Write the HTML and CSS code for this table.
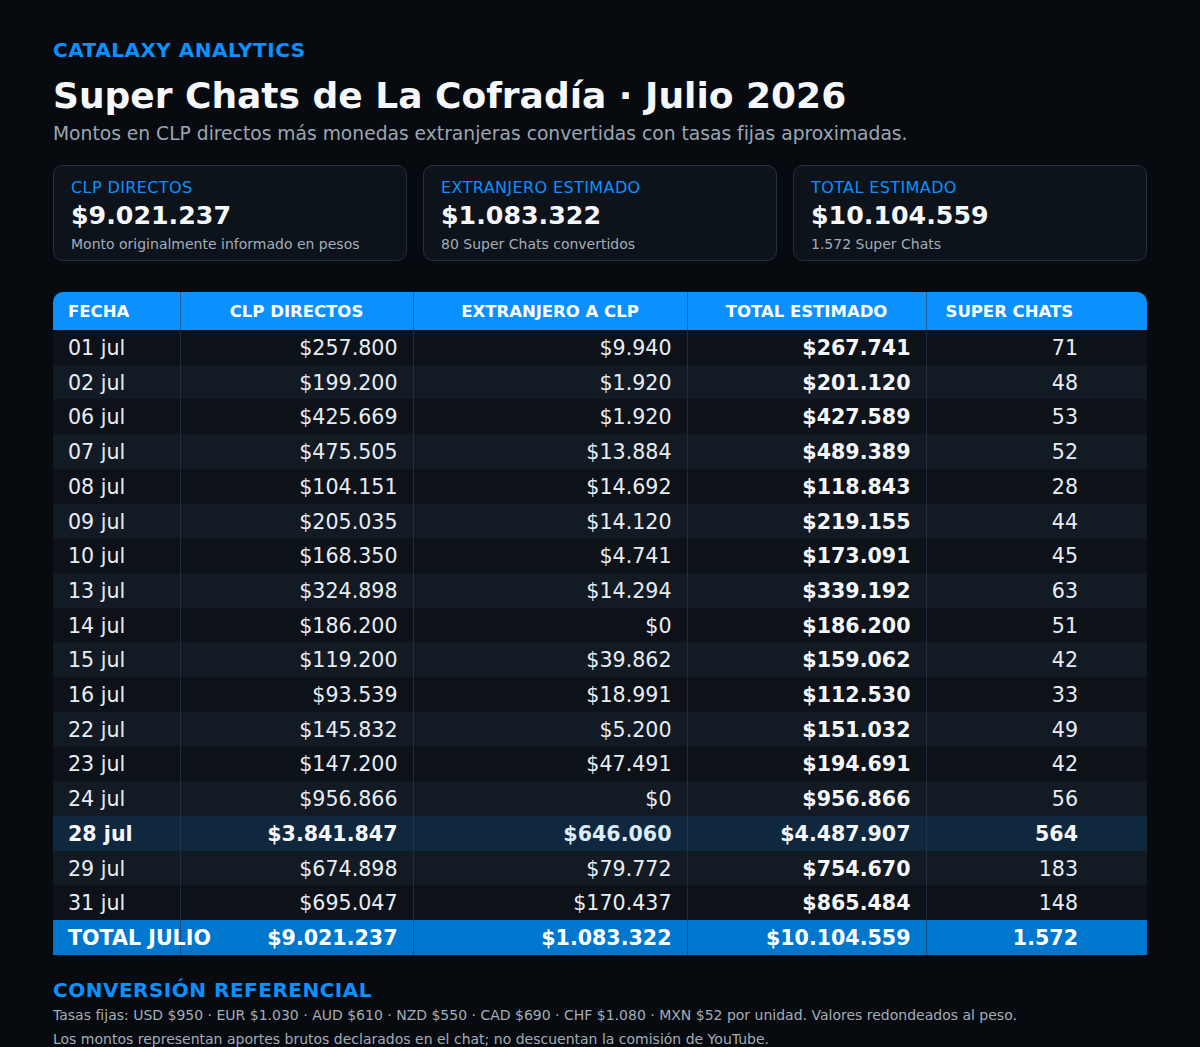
FILE: index.html
```html
<!DOCTYPE html>
<html lang="es">
<head>
<meta charset="utf-8">
<title>Super Chats de La Cofradía · Julio 2026</title>
<link rel="stylesheet" href="styles.css">
</head>
<body>
<main class="page">
  <header class="head">
    <div class="brand">CATALAXY ANALYTICS</div>
    <h1 class="title">Super Chats de La Cofradía · Julio 2026</h1>
    <p class="subtitle">Montos en CLP directos más monedas extranjeras convertidas con tasas fijas aproximadas.</p>
  </header>

  <section class="cards">
    <div class="card">
      <div class="card-label">CLP DIRECTOS</div>
      <div class="card-value">$9.021.237</div>
      <div class="card-note">Monto originalmente informado en pesos</div>
    </div>
    <div class="card">
      <div class="card-label">EXTRANJERO ESTIMADO</div>
      <div class="card-value">$1.083.322</div>
      <div class="card-note">80 Super Chats convertidos</div>
    </div>
    <div class="card">
      <div class="card-label">TOTAL ESTIMADO</div>
      <div class="card-value">$10.104.559</div>
      <div class="card-note">1.572 Super Chats</div>
    </div>
  </section>

  <div class="table-wrap">
    <table class="data">
      <colgroup>
        <col class="c-date"><col class="c-clp"><col class="c-ext"><col class="c-tot"><col class="c-sc">
      </colgroup>
      <thead>
        <tr>
          <th class="left">FECHA</th>
          <th>CLP DIRECTOS</th>
          <th>EXTRANJERO A CLP</th>
          <th>TOTAL ESTIMADO</th>
          <th class="left sc-head">SUPER CHATS</th>
        </tr>
      </thead>
      <tbody>
        <tr><td>01 jul</td><td class="num">$257.800</td><td class="num">$9.940</td><td class="num strong">$267.741</td><td class="num sc">71</td></tr>
        <tr><td>02 jul</td><td class="num">$199.200</td><td class="num">$1.920</td><td class="num strong">$201.120</td><td class="num sc">48</td></tr>
        <tr><td>06 jul</td><td class="num">$425.669</td><td class="num">$1.920</td><td class="num strong">$427.589</td><td class="num sc">53</td></tr>
        <tr><td>07 jul</td><td class="num">$475.505</td><td class="num">$13.884</td><td class="num strong">$489.389</td><td class="num sc">52</td></tr>
        <tr><td>08 jul</td><td class="num">$104.151</td><td class="num">$14.692</td><td class="num strong">$118.843</td><td class="num sc">28</td></tr>
        <tr><td>09 jul</td><td class="num">$205.035</td><td class="num">$14.120</td><td class="num strong">$219.155</td><td class="num sc">44</td></tr>
        <tr><td>10 jul</td><td class="num">$168.350</td><td class="num">$4.741</td><td class="num strong">$173.091</td><td class="num sc">45</td></tr>
        <tr><td>13 jul</td><td class="num">$324.898</td><td class="num">$14.294</td><td class="num strong">$339.192</td><td class="num sc">63</td></tr>
        <tr><td>14 jul</td><td class="num">$186.200</td><td class="num">$0</td><td class="num strong">$186.200</td><td class="num sc">51</td></tr>
        <tr><td>15 jul</td><td class="num">$119.200</td><td class="num">$39.862</td><td class="num strong">$159.062</td><td class="num sc">42</td></tr>
        <tr><td>16 jul</td><td class="num">$93.539</td><td class="num">$18.991</td><td class="num strong">$112.530</td><td class="num sc">33</td></tr>
        <tr><td>22 jul</td><td class="num">$145.832</td><td class="num">$5.200</td><td class="num strong">$151.032</td><td class="num sc">49</td></tr>
        <tr><td>23 jul</td><td class="num">$147.200</td><td class="num">$47.491</td><td class="num strong">$194.691</td><td class="num sc">42</td></tr>
        <tr><td>24 jul</td><td class="num">$956.866</td><td class="num">$0</td><td class="num strong">$956.866</td><td class="num sc">56</td></tr>
        <tr class="peak"><td>28 jul</td><td class="num">$3.841.847</td><td class="num ext-peak">$646.060</td><td class="num strong">$4.487.907</td><td class="num sc">564</td></tr>
        <tr><td>29 jul</td><td class="num">$674.898</td><td class="num">$79.772</td><td class="num strong">$754.670</td><td class="num sc">183</td></tr>
        <tr><td>31 jul</td><td class="num">$695.047</td><td class="num">$170.437</td><td class="num strong">$865.484</td><td class="num sc">148</td></tr>
      </tbody>
      <tfoot>
        <tr><td class="total-label">TOTAL JULIO</td><td class="num">$9.021.237</td><td class="num">$1.083.322</td><td class="num">$10.104.559</td><td class="num sc">1.572</td></tr>
      </tfoot>
    </table>
  </div>

  <section class="notes">
    <h2 class="notes-title">CONVERSIÓN REFERENCIAL</h2>
    <p class="note">Tasas fijas: USD $950 · EUR $1.030 · AUD $610 · NZD $550 · CAD $690 · CHF $1.080 · MXN $52 por unidad. Valores redondeados al peso.</p>
    <p class="note">Los montos representan aportes brutos declarados en el chat; no descuentan la comisión de YouTube.</p>
  </section>
</main>
</body>
</html>
```

FILE: styles.css
```css
* { box-sizing: border-box; }

html, body {
  margin: 0;
  padding: 0;
  background: #070b10;
}

body {
  font-family: "DejaVu Sans", "Liberation Sans", sans-serif;
  color: #e8edf3;
}

.page {
  padding: 38px 53px 0 53px;
}

.brand {
  font-size: 20px;
  font-weight: bold;
  color: #0a91ff;
  letter-spacing: 0.5px;
  line-height: 24px;
}

.title {
  margin: 12px 0 0 0;
  font-size: 36px;
  line-height: 44px;
  font-weight: bold;
  color: #f5f7fa;
}

.subtitle {
  margin: 4px 0 0 0;
  font-size: 18.7px;
  line-height: 24px;
  color: #9ba6b2;
}

.cards {
  display: grid;
  grid-template-columns: repeat(3, 1fr);
  gap: 16px;
  margin-top: 19px;
}

.card {
  background: #0d131b;
  border: 1px solid #25313f;
  border-radius: 10px;
  padding: 12px 17px 0 17px;
  height: 96px;
}

.card-label {
  font-size: 16px;
  line-height: 20px;
  letter-spacing: 0.4px;
  color: #0a91ff;
}

.card-value {
  font-size: 25.3px;
  line-height: 30px;
  font-weight: bold;
  color: #f5f7fa;
  margin-top: 3px;
}

.card-note {
  font-size: 14px;
  line-height: 18px;
  color: #a3adb8;
  margin-top: 4px;
}

.table-wrap {
  margin-top: 31px;
  border-radius: 10px 10px 0 0;
  overflow: hidden;
}

.data {
  width: 100%;
  table-layout: fixed;
  border-collapse: collapse;
  font-size: 20.6px;
}

.c-date { width: 127px; }
.c-clp { width: 233px; }
.c-ext { width: 274px; }
.c-tot { width: 239px; }
.c-sc { width: 221px; }

.data th,
.data td {
  border-left: 1px solid rgba(40, 60, 85, 0.6);
  white-space: nowrap;
  overflow: visible;
}

.data th:first-child,
.data td:first-child {
  border-left: none;
}

.data thead th {
  background: #0a91ff;
  color: #ffffff;
  font-size: 16.5px;
  font-weight: bold;
  line-height: 18px;
  padding: 11px 15px 9px 15px;
  text-align: center;
}

.data thead th.left {
  text-align: left;
}

.data thead th.sc-head {
  padding-left: 19px;
}

.data td {
  padding: 6px 15px 4px 15px;
  line-height: 24.7px;
  color: #e8edf3;
}

.data tbody tr:nth-child(odd) td { background: #0d1219; }
.data tbody tr:nth-child(even) td { background: #121a23; }

.data td.num { text-align: right; }
.data td.sc { padding-right: 69px; }
.data td.strong { font-weight: bold; color: #f5f7fa; }

.data tbody tr.peak td {
  background: #10283e;
  font-weight: bold;
  color: #f5f7fa;
}

.data tbody tr.peak td.ext-peak {
  color: #dcecfb;
}

.data tfoot td {
  background: #0077cf;
  color: #ffffff;
  font-weight: bold;
  line-height: 25px;
  border-left-color: rgba(10, 60, 110, 0.7);
}

.data tfoot td.total-label {
  overflow: visible;
  position: relative;
  z-index: 1;
}

.notes {
  margin-top: 23px;
}

.notes-title {
  margin: 0;
  font-size: 20px;
  line-height: 24px;
  font-weight: bold;
  letter-spacing: 0.5px;
  color: #0a91ff;
}

.note {
  margin: 3px 0 0 0;
  font-size: 14px;
  line-height: 21px;
  color: #a3adb8;
}

.note + .note {
  margin-top: 3px;
}
```
